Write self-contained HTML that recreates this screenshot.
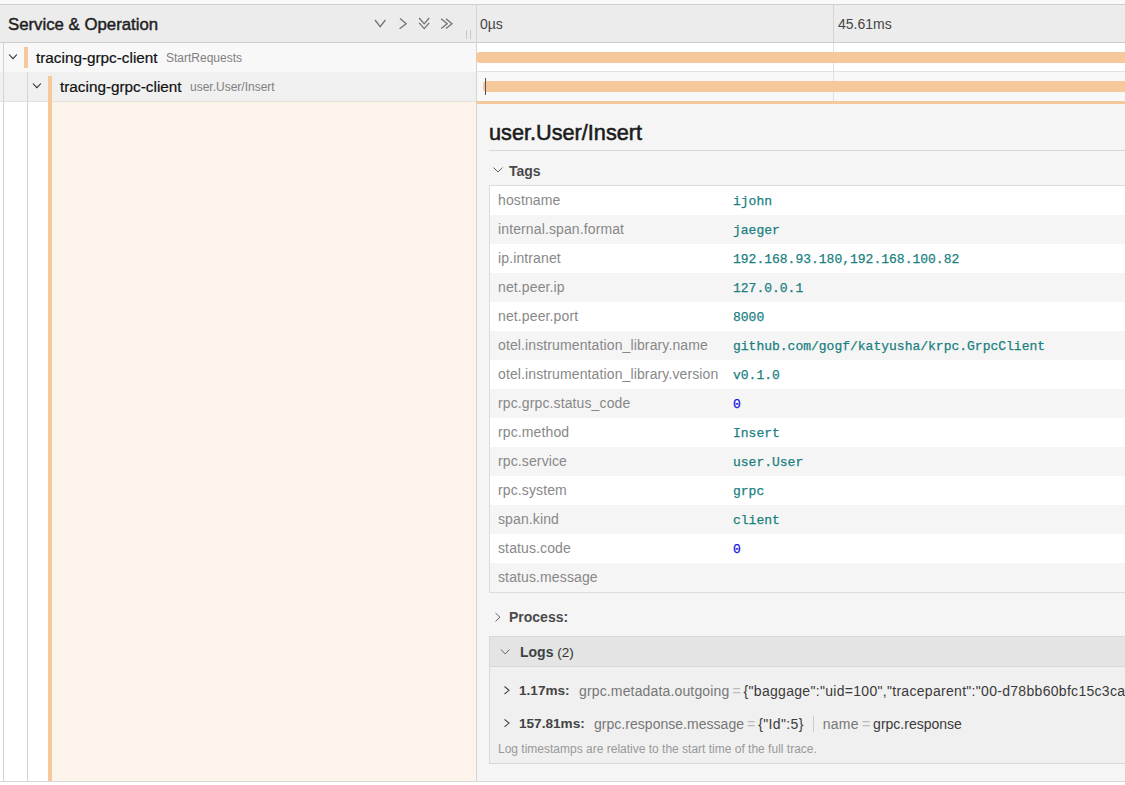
<!DOCTYPE html>
<html><head><meta charset="utf-8">
<style>
*{box-sizing:border-box;margin:0;padding:0}
html,body{width:1125px;height:785px;overflow:hidden;background:#fff;font-family:"Liberation Sans",sans-serif;color:#000}
.a{position:absolute}
.t{position:absolute;white-space:nowrap;line-height:1}
.mono{font-family:"Liberation Mono",monospace;font-size:13px;-webkit-text-stroke:0.25px currentColor}
.ic{position:absolute;overflow:visible}
</style></head><body>
<!-- top strip -->
<div class="a" style="left:0;top:0;width:1125px;height:4px;background:#f9f9f9"></div>
<!-- header -->
<div class="a" style="left:0;top:4px;width:1125px;height:39px;background:#ececec;border-top:1px solid #cfcfcf;border-bottom:1px solid #cdcdcd"></div>
<div class="t" style="left:8px;top:17px;font-size:16.8px;color:#1f1f1f;-webkit-text-stroke:0.45px #1f1f1f">Service &amp; Operation</div>
<svg class="ic" style="left:0;top:0" width="476" height="42">
 <g fill="none" stroke="#737373" stroke-width="1.3">
  <path d="M375 20 L380.2 26.6 L385.4 20"/>
  <path d="M400 18.6 L406.2 23.7 L399.6 28.8"/>
  <path d="M419.2 18 L424.2 23.8 L429.2 18 M419.2 22.8 L424.2 28.6 L429.2 22.8"/>
  <path d="M441.2 18.8 L447.2 23.7 L441.2 28.6 M446 18.8 L452 23.7 L446 28.6"/>
 </g>
 <g stroke="#c8c8c8" stroke-width="1"><path d="M466.5 30 V39 M470.5 30 V39"/></g>
</svg>
<div class="a" style="left:476px;top:5px;width:1px;height:37px;background:#d4d4d4"></div>
<div class="a" style="left:833px;top:5px;width:1px;height:37px;background:#d4d4d4"></div>
<div class="t" style="left:480px;top:17px;font-size:14px;color:#444">0µs</div>
<div class="t" style="left:838px;top:17px;font-size:14px;color:#444">45.61ms</div>

<!-- row 1 -->
<div class="a" style="left:0;top:43px;width:476px;height:29px;background:#f8f8f8"></div>
<div class="a" style="left:477px;top:43px;width:648px;height:28px;background:#fff;"></div>
<div class="a" style="left:476px;top:71px;width:649px;height:1px;background:#e2e2e2"></div>
<!-- row 2 -->
<div class="a" style="left:0;top:72px;width:476px;height:29px;background:#f0f0f0"></div>
<div class="a" style="left:477px;top:72px;width:648px;height:29px;background:#f8f8f8"></div>

<div class="a" style="left:0;top:101px;width:476px;height:1px;background:#e2e2e2"></div>
<div class="a" style="left:52px;top:101px;width:424px;height:1px;background:#e6dfd8"></div>
<!-- guides -->
<div class="a" style="left:3px;top:43px;width:1px;height:738px;background:#d3d3d3"></div>
<div class="a" style="left:27px;top:72px;width:1px;height:709px;background:#d3d3d3"></div>
<div class="a" style="left:476px;top:43px;width:1px;height:738px;background:#d4d4d4"></div>
<div class="a" style="left:833px;top:43px;width:1px;height:58px;background:#e0e0e0"></div>

<!-- chevrons -->
<svg class="ic" style="left:0;top:0" width="60" height="100">
 <g fill="none" stroke="#2a2a2a" stroke-width="1.05">
  <path d="M9.1 54.5 L13 58.7 L16.9 54.5"/>
  <path d="M32.9 83.5 L36.9 87.7 L40.9 83.5"/>
 </g>
</svg>
<div class="a" style="left:24px;top:47px;width:4px;height:21px;background:#f5c99b"></div>
<div class="a" style="left:48px;top:76px;width:4px;height:705px;background:#f5c99b"></div>

<div class="t" style="left:36px;top:50px;font-size:15.3px;color:#111;-webkit-text-stroke:0.2px #111">tracing-grpc-client</div>
<div class="t" style="left:166px;top:52px;font-size:12px;color:#808080">StartRequests</div>
<div class="t" style="left:60px;top:79px;font-size:15.3px;color:#111;-webkit-text-stroke:0.2px #111">tracing-grpc-client</div>
<div class="t" style="left:190px;top:81px;font-size:12px;color:#808080">user.User/Insert</div>

<!-- bars -->
<div class="a" style="left:476px;top:52px;width:660px;height:11px;background:#f5c99b;border-radius:4px"></div>
<div class="a" style="left:483px;top:81px;width:660px;height:11px;background:#f5c99b;border-radius:4px"></div>
<div class="a" style="left:485px;top:78px;width:1px;height:17px;background:#555"></div>

<!-- detail row -->
<div class="a" style="left:52px;top:102px;width:424px;height:679px;background:#fcf3ea"></div>
<div class="a" style="left:477px;top:101px;width:648px;height:680px;background:#f5f5f5;border-top:3px solid #f5c99b"></div>
<div class="a" style="left:0;top:781px;width:1125px;height:1px;background:#d8d8d8"></div>

<div class="t" style="left:489px;top:122px;font-size:21.7px;color:#1b1b1b;-webkit-text-stroke:0.55px #1b1b1b">user.User/Insert</div>
<div class="a" style="left:489px;top:150px;width:636px;height:1px;background:#d8d8d8"></div>


<div class="t" style="left:509px;top:164px;font-size:14px;font-weight:bold;color:#4a4a4a">Tags</div>

<!-- table -->
<div class="a" id="tbl" style="left:489px;top:185px;width:640px;height:408px;background:#fff;border:1px solid #dcdcdc"></div>

<div class="t" style="left:498px;top:193px;font-size:14px;letter-spacing:0.12px;color:#888">hostname</div>
<div class="t mono" style="left:733px;top:195px;color:#1a7f7f">ijohn</div>
<div class="a" style="left:490px;top:215px;width:635px;height:29px;background:#f5f5f5"></div>
<div class="t" style="left:498px;top:222px;font-size:14px;letter-spacing:0.12px;color:#888">internal.span.format</div>
<div class="t mono" style="left:733px;top:224px;color:#1a7f7f">jaeger</div>
<div class="t" style="left:498px;top:251px;font-size:14px;letter-spacing:0.12px;color:#888">ip.intranet</div>
<div class="t mono" style="left:733px;top:253px;color:#1a7f7f">192.168.93.180,192.168.100.82</div>
<div class="a" style="left:490px;top:273px;width:635px;height:29px;background:#f5f5f5"></div>
<div class="t" style="left:498px;top:280px;font-size:14px;letter-spacing:0.12px;color:#888">net.peer.ip</div>
<div class="t mono" style="left:733px;top:282px;color:#1a7f7f">127.0.0.1</div>
<div class="t" style="left:498px;top:309px;font-size:14px;letter-spacing:0.12px;color:#888">net.peer.port</div>
<div class="t mono" style="left:733px;top:311px;color:#1a7f7f">8000</div>
<div class="a" style="left:490px;top:331px;width:635px;height:29px;background:#f5f5f5"></div>
<div class="t" style="left:498px;top:338px;font-size:14px;letter-spacing:0.12px;color:#888">otel.instrumentation_library.name</div>
<div class="t mono" style="left:733px;top:340px;color:#1a7f7f">github.com/gogf/katyusha/krpc.GrpcClient</div>
<div class="t" style="left:498px;top:367px;font-size:14px;letter-spacing:0.12px;color:#888">otel.instrumentation_library.version</div>
<div class="t mono" style="left:733px;top:369px;color:#1a7f7f">v0.1.0</div>
<div class="a" style="left:490px;top:389px;width:635px;height:29px;background:#f5f5f5"></div>
<div class="t" style="left:498px;top:396px;font-size:14px;letter-spacing:0.12px;color:#888">rpc.grpc.status_code</div>
<div class="t mono" style="left:733px;top:398px;color:#1010e0">0</div>
<div class="t" style="left:498px;top:425px;font-size:14px;letter-spacing:0.12px;color:#888">rpc.method</div>
<div class="t mono" style="left:733px;top:427px;color:#1a7f7f">Insert</div>
<div class="a" style="left:490px;top:447px;width:635px;height:29px;background:#f5f5f5"></div>
<div class="t" style="left:498px;top:454px;font-size:14px;letter-spacing:0.12px;color:#888">rpc.service</div>
<div class="t mono" style="left:733px;top:456px;color:#1a7f7f">user.User</div>
<div class="t" style="left:498px;top:483px;font-size:14px;letter-spacing:0.12px;color:#888">rpc.system</div>
<div class="t mono" style="left:733px;top:485px;color:#1a7f7f">grpc</div>
<div class="a" style="left:490px;top:505px;width:635px;height:29px;background:#f5f5f5"></div>
<div class="t" style="left:498px;top:512px;font-size:14px;letter-spacing:0.12px;color:#888">span.kind</div>
<div class="t mono" style="left:733px;top:514px;color:#1a7f7f">client</div>
<div class="t" style="left:498px;top:541px;font-size:14px;letter-spacing:0.12px;color:#888">status.code</div>
<div class="t mono" style="left:733px;top:543px;color:#1010e0">0</div>
<div class="a" style="left:490px;top:563px;width:635px;height:29px;background:#f5f5f5"></div>
<div class="t" style="left:498px;top:570px;font-size:14px;letter-spacing:0.12px;color:#888">status.message</div>
<div class="t" style="left:509px;top:610px;font-size:14px;font-weight:bold;color:#4a4a4a">Process:</div>

<!-- logs -->
<div class="a" style="left:489px;top:636px;width:640px;height:128px;border:1px solid #d8d8d8;background:#f0f0f0"></div>
<div class="a" style="left:490px;top:637px;width:640px;height:30px;background:#e4e4e4;border-bottom:1px solid #d8d8d8"></div>

<svg class="ic" style="left:0;top:0" width="520" height="740">
 <g fill="none" stroke="#444" stroke-width="1.1">
  <path d="M504.5 686.5 L509 690.3 L504.5 694"/>
  <path d="M504.5 719.3 L509 723.1 L504.5 726.8"/>
 </g>
</svg>
<div class="t" style="left:520px;top:645px;font-size:14px;color:#333"><b style="color:#3c4346">Logs</b> <span style="font-size:13.5px">(2)</span></div>
<div class="t" style="left:519px;top:684px;font-size:13.6px;font-weight:bold;color:#444">1.17ms:</div>
<div class="t" style="left:579px;top:684px;font-size:14px;color:#777"><span style="letter-spacing:0.15px">grpc.metadata.outgoing</span><span style="color:#bbb;margin:0 3px">=</span><span style="color:#3a3a3a;letter-spacing:0.3px">{"baggage":"uid=100","traceparent":"00-d78bb60bfc15c3ca5b19f0a1234</span></div>
<div class="t" style="left:519px;top:717px;font-size:13.6px;font-weight:bold;color:#444">157.81ms:</div>
<div class="t" style="left:594px;top:716px;font-size:14px;color:#777"><span style="letter-spacing:0.03px">grpc.response.message</span><span style="color:#bbb;margin:0 3px">=</span><span style="color:#3a3a3a;letter-spacing:0.35px">{"Id":5}</span><span style="display:inline-block;width:1px;height:16px;background:#ccc;margin:0 9px 0 9px;vertical-align:-3px"></span><span style="letter-spacing:0.3px">name</span><span style="color:#bbb;margin:0 3px">=</span><span style="color:#3a3a3a;letter-spacing:0px">grpc.response</span></div>
<div class="t" style="left:498px;top:743px;font-size:12px;color:#999">Log timestamps are relative to the start time of the full trace.</div>
<svg class="ic" style="left:0;top:0" width="520" height="680">
 <g fill="none" stroke="#666" stroke-width="1">
  <path d="M493.5 167.5 L498 172 L502.5 167.5"/>
  <path d="M495.5 613 L500 617.2 L495.5 621.4"/>
  <path d="M501 649.5 L505.2 654 L509.4 649.5"/>
 </g>
</svg>
</body></html>
